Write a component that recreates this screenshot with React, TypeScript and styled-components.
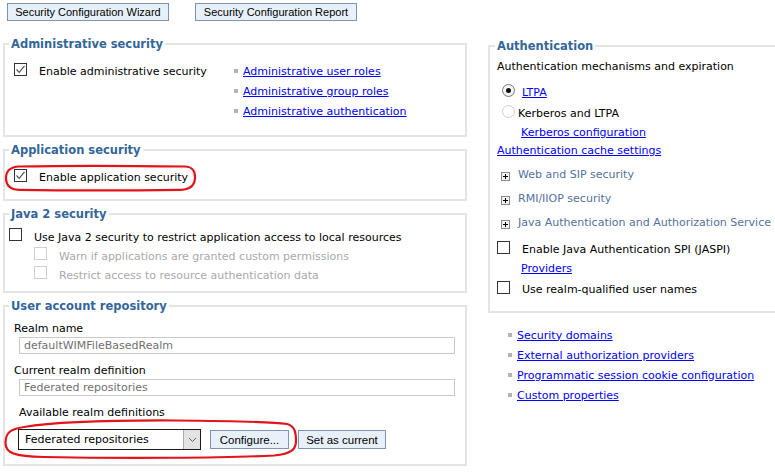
import React from "react";
import styled, { createGlobalStyle } from "styled-components";

const Global = createGlobalStyle`
  html, body { margin: 0; padding: 0; background: #fff; }
  body { font-family: "DejaVu Sans", Verdana, sans-serif; font-size: 11px; color: #000; }
`;

const Page = styled.div`
  position: relative;
  width: 775px;
  height: 474px;
  overflow: hidden;
`;

const TopBar = styled.div`
  display: flex;
  gap: 26px;
  padding: 3px 0 0 7px;
`;

const Btn = styled.button<{ $w: number }>`
  font-family: "Liberation Sans", Arial, sans-serif;
  font-size: 11px;
  width: ${(p) => p.$w}px;
  height: 18px;
  padding: 0;
  margin: 0;
  background: #e8f1fb;
  border: 1px solid #7f95b1;
  border-radius: 0;
  color: #000;
  line-height: 16px;
`;

const Main = styled.div`
  display: flex;
  align-items: flex-start;
  gap: 21px;
  padding: 16px 0 0 3px;
`;

const LeftCol = styled.div`
  display: flex;
  flex-direction: column;
  gap: 6px;
  width: 464px;
  flex: none;
`;

const RightCol = styled.div`
  display: flex;
  flex-direction: column;
  width: 300px;
  flex: none;
  margin-top: 2px;
`;

const Box = styled.fieldset`
  margin: 0;
  padding: 0;
  min-width: 0;
  border: 2px solid #e4e4e4;
`;

const Legend = styled.legend<{ $ml?: number }>`
  font-family: "DejaVu Sans", Verdana, sans-serif;
  font-weight: bold;
  font-size: 11.5px;
  line-height: 14px;
  color: #336699;
  padding: 0 2px;
  margin-left: ${(p) => p.$ml ?? 4}px;
`;

const Content = styled.div<{ $pad: string }>`
  padding: ${(p) => p.$pad};
  display: flex;
  flex-direction: column;
`;

const AdminGrid = styled.div`
  display: grid;
  grid-template-columns: 220px 1fr;
`;

const Row = styled.div<{ $h: number; $ml?: number; $gap?: number; $dim?: boolean; $tone?: string; $mt?: number }>`
  display: flex;
  align-items: center;
  height: ${(p) => p.$h}px;
  margin-left: ${(p) => p.$ml ?? 0}px;
  margin-top: ${(p) => p.$mt ?? 0}px;
  gap: ${(p) => p.$gap ?? 0}px;
  color: ${(p) => (p.$dim ? "#a9a9a9" : p.$tone ?? "#000")};
  white-space: nowrap;
`;

const Label = styled.span<{ $dy?: number }>`
  position: relative;
  top: ${(p) => p.$dy ?? 0}px;
`;

const CheckBox = styled.span<{ $disabled?: boolean; $dy?: number }>`
  display: inline-flex;
  align-items: center;
  justify-content: center;
  box-sizing: border-box;
  width: 13px;
  height: 13px;
  flex: none;
  background: #fff;
  border: 1px solid ${(p) => (p.$disabled ? "#cfcfcf" : "#333")};
  position: relative;
  top: ${(p) => p.$dy ?? 0}px;
`;

const Radio = styled.span<{ $on?: boolean; $dy?: number }>`
  display: inline-flex;
  align-items: center;
  justify-content: center;
  box-sizing: border-box;
  width: 13px;
  height: 13px;
  border-radius: 50%;
  flex: none;
  background: ${(p) => (p.$on ? "radial-gradient(circle at 50% 40%, #fff 0%, #e8e8e8 100%)" : "#fff")};
  border: 1px solid ${(p) => (p.$on ? "#7a7a7a" : "#cfcfcf")};
  position: relative;
  top: ${(p) => p.$dy ?? 0}px;
`;

const Dot = styled.span`
  width: 5px;
  height: 5px;
  border-radius: 50%;
  background: #111;
`;

const PlusBox = styled.span<{ $dy?: number }>`
  display: inline-flex;
  align-items: center;
  justify-content: center;
  box-sizing: border-box;
  width: 9px;
  height: 9px;
  flex: none;
  border: 1px solid #8a8a8a;
  background: #f2f2f2;
  position: relative;
  top: ${(p) => p.$dy ?? 0}px;
`;

const Link = styled.a`
  color: #0000ff;
  text-decoration: underline;
  cursor: pointer;
`;

const LinkList = styled.ul<{ $ml?: number; $pt?: number }>`
  list-style: none;
  margin: 0;
  padding: ${(p) => p.$pt ?? 0}px 0 0 ${(p) => p.$ml ?? 0}px;
`;

const LinkItem = styled.li`
  display: flex;
  align-items: center;
  height: 20px;
  gap: 5px;
  white-space: nowrap;
`;

const Bullet = styled.span`
  width: 4px;
  height: 4px;
  background: #b4b4b4;
  flex: none;
`;

const FieldLabel = styled.div<{ $ml?: number }>`
  height: 14px;
  line-height: 14px;
  margin-left: ${(p) => p.$ml ?? 0}px;
  color: #000;
`;

const TextInput = styled.div`
  box-sizing: border-box;
  width: 436px;
  height: 17px;
  margin: 1px 0 10px 5px;
  border: 1px solid #c9c9c9;
  color: #707070;
  line-height: 15px;
  padding-left: 4px;
  background: #fff;
`;

const Controls = styled.div`
  display: flex;
  align-items: center;
  gap: 9px;
  margin: 9px 0 0 4px;
`;

const Select = styled.div`
  box-sizing: border-box;
  width: 183px;
  height: 21px;
  border: 1px solid #1a1a1a;
  display: flex;
  align-items: stretch;
  background: #fff;
`;

const SelectValue = styled.span`
  flex: 1;
  padding-left: 6px;
  line-height: 19px;
`;

const SelectArrow = styled.span`
  width: 16px;
  background: #e3e3e3;
  border-left: 1px solid #a9a9a9;
  display: flex;
  align-items: center;
  justify-content: center;
`;

const SmallBtn = styled(Btn)`
  height: 19px;
  font-size: 11.5px;
`;

const Oval = styled.svg<{ $x: number; $y: number }>`
  position: absolute;
  left: ${(p) => p.$x}px;
  top: ${(p) => p.$y}px;
  overflow: visible;
  pointer-events: none;
`;

const Tick = () => (
  <svg width="11" height="11" viewBox="0 0 11 11">
    <polyline points="1.5,5.5 4.2,8.3 9.5,1.8" fill="none" stroke="#555" strokeWidth="1.2" />
  </svg>
);

const Plus = () => (
  <svg width="7" height="7" viewBox="0 0 7 7">
    <path d="M1 3.5H6M3.5 1V6" stroke="#000" strokeWidth="1" />
  </svg>
);

const Chevron = () => (
  <svg width="9" height="6" viewBox="0 0 9 6">
    <polyline points="1,1 4.5,4.5 8,1" fill="none" stroke="#666" strokeWidth="1" />
  </svg>
);

export default function App() {
  return (
    <Page>
      <Global />
      <TopBar>
        <Btn $w={162}>Security Configuration Wizard</Btn>
        <Btn $w={162}>Security Configuration Report</Btn>
      </TopBar>
      <Main>
        <LeftCol>
          <Box>
            <Legend>Administrative security</Legend>
            <Content $pad="10px 0 14px 9px">
              <AdminGrid>
                <Row $h={20} $gap={12}>
                  <CheckBox $dy={-2}>
                    <Tick />
                  </CheckBox>
                  <Label>Enable administrative security</Label>
                </Row>
                <LinkList>
                  <LinkItem>
                    <Bullet />
                    <Link>Administrative user roles</Link>
                  </LinkItem>
                  <LinkItem>
                    <Bullet />
                    <Link>Administrative group roles</Link>
                  </LinkItem>
                  <LinkItem>
                    <Bullet />
                    <Link>Administrative authentication</Link>
                  </LinkItem>
                </LinkList>
              </AdminGrid>
            </Content>
          </Box>

          <Box>
            <Legend>Application security</Legend>
            <Content $pad="9px 0 13px 9px">
              <Row $h={20} $gap={12}>
                <CheckBox $dy={-1}>
                  <Tick />
                </CheckBox>
                <Label $dy={1}>Enable application security</Label>
              </Row>
            </Content>
          </Box>

          <Box>
            <Legend>Java 2 security</Legend>
            <Content $pad="5px 0 8px 4px">
              <Row $h={19} $gap={12}>
                <CheckBox $dy={-1} />
                <Label $dy={2}>Use Java 2 security to restrict application access to local resources</Label>
              </Row>
              <Row $h={19} $gap={12} $ml={25} $dim>
                <CheckBox $disabled $dy={-1} />
                <Label $dy={2}>Warn if applications are granted custom permissions</Label>
              </Row>
              <Row $h={19} $gap={12} $ml={25} $dim>
                <CheckBox $disabled $dy={-1} />
                <Label $dy={2}>Restrict access to resource authentication data</Label>
              </Row>
            </Content>
          </Box>

          <Box>
            <Legend>User account repository</Legend>
            <Content $pad="9px 0 14px 9px">
              <FieldLabel>Realm name</FieldLabel>
              <TextInput>defaultWIMFileBasedRealm</TextInput>
              <FieldLabel>Current realm definition</FieldLabel>
              <TextInput>Federated repositories</TextInput>
              <FieldLabel $ml={5}>Available realm definitions</FieldLabel>
              <Controls>
                <Select>
                  <SelectValue>Federated repositories</SelectValue>
                  <SelectArrow>
                    <Chevron />
                  </SelectArrow>
                </Select>
                <SmallBtn $w={79}>Configure...</SmallBtn>
                <SmallBtn $w={88}>Set as current</SmallBtn>
              </Controls>
            </Content>
          </Box>
        </LeftCol>

        <RightCol>
          <Box>
            <Legend $ml={5}>Authentication</Legend>
            <Content $pad="7px 0 12px 7px">
              <FieldLabel>Authentication mechanisms and expiration</FieldLabel>
              <Row $h={22} $ml={5} $gap={7} $mt={6}>
                <Radio $on $dy={-1}>
                  <Dot />
                </Radio>
                <Label $dy={1}>
                  <Link>LTPA</Link>
                </Label>
              </Row>
              <Row $h={21} $ml={5} $gap={3}>
                <Radio $dy={-1} />
                <Label $dy={1}>Kerberos and LTPA</Label>
              </Row>
              <Row $h={18} $ml={24}>
                <Link>Kerberos configuration</Link>
              </Row>
              <Row $h={18}>
                <Link>Authentication cache settings</Link>
              </Row>
              <Row $h={24} $ml={4} $gap={8} $tone="#54729a" $mt={3}>
                <PlusBox $dy={2}>
                  <Plus />
                </PlusBox>
                <Label>Web and SIP security</Label>
              </Row>
              <Row $h={24} $ml={4} $gap={8} $tone="#54729a">
                <PlusBox $dy={2}>
                  <Plus />
                </PlusBox>
                <Label>RMI/IIOP security</Label>
              </Row>
              <Row $h={24} $ml={4} $gap={8} $tone="#54729a">
                <PlusBox $dy={2}>
                  <Plus />
                </PlusBox>
                <Label>Java Authentication and Authorization Service</Label>
              </Row>
              <Row $h={22} $gap={12} $mt={3}>
                <CheckBox $dy={-1} />
                <Label $dy={1}>Enable Java Authentication SPI (JASPI)</Label>
              </Row>
              <Row $h={18} $ml={24}>
                <Link>Providers</Link>
              </Row>
              <Row $h={22} $gap={12}>
                <CheckBox $dy={-1} />
                <Label $dy={1}>Use realm-qualified user names</Label>
              </Row>
            </Content>
          </Box>
          <LinkList $ml={20} $pt={12}>
            <LinkItem>
              <Bullet />
              <Link>Security domains</Link>
            </LinkItem>
            <LinkItem>
              <Bullet />
              <Link>External authorization providers</Link>
            </LinkItem>
            <LinkItem>
              <Bullet />
              <Link>Programmatic session cookie configuration</Link>
            </LinkItem>
            <LinkItem>
              <Bullet />
              <Link>Custom properties</Link>
            </LinkItem>
          </LinkList>
        </RightCol>
      </Main>

      <Oval $x={5} $y={165} width="191" height="26" viewBox="0 0 191 26">
        <path
          d="M14 1.5 C60 0.5 130 0.8 180 1.5 C188 2 190 6 190 12 C190 20 186 24.5 176 24.8 C120 25.5 60 25.5 14 24.8 C5 24.5 1 20 1 13 C1 6 5 2 14 1.5 Z"
          fill="none"
          stroke="#e3131b"
          strokeWidth="2.2"
        />
      </Oval>
      <Oval $x={4} $y={419} width="294" height="40" viewBox="0 0 294 40">
        <path
          d="M20 8 C50 3 100 1.2 170 1.5 C230 2 268 3 283 5 C291 7 292 14 292 22 C292 30 288 35 270 36.5 C220 39 120 39.5 40 38 C10 37.5 1.5 34 1.5 24 C1.5 14 6 10 20 8 Z"
          fill="none"
          stroke="#e3131b"
          strokeWidth="2.2"
        />
      </Oval>
    </Page>
  );
}
